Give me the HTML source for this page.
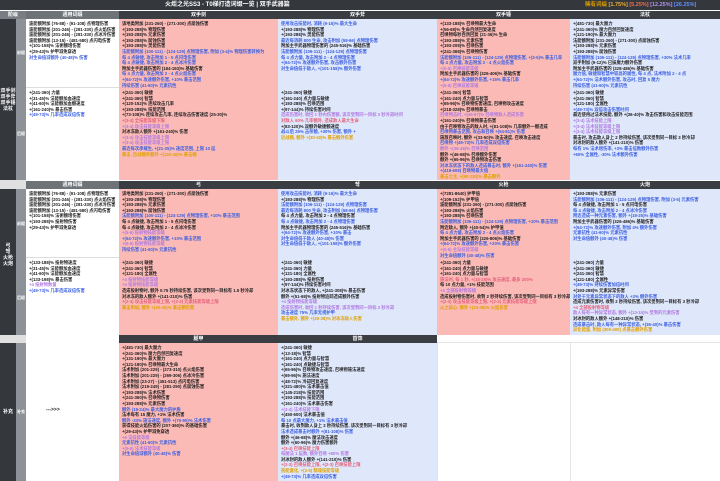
<!DOCTYPE html>
<html><head><meta charset="utf-8"><style>
*{margin:0;padding:0;box-sizing:border-box}
body{width:720px;height:481px;background:#fff;position:relative;overflow:hidden;font-family:"Liberation Sans","Noto Sans CJK SC",sans-serif;font-size:4.3px;line-height:5.6px;color:#222}
.a{position:absolute}
.dk{background:#34373c}
.hd{background:#3a3d42;color:#fff;text-align:center;font-size:5px;line-height:8px;font-weight:bold}
.pk{background:#fbbab6}
.bl{background:#dfe7fb}
.c{padding:2px 3px;overflow:hidden;font-weight:bold;white-space:nowrap}
.b{color:#3b5fe0}.p{color:#b07ae0}.r{color:#e3607a}.o{color:#e0a000}
.side{color:#fff;text-align:center;font-size:5px;line-height:6px;font-weight:bold}
.bd{border-bottom:1px solid #ddd}
</style></head><body>
<div class="a dk" style="left:0;top:0;width:720px;height:10px"></div>
<div class="a" style="left:165px;top:1px;color:#fff;font-size:6px;line-height:8px;font-weight:bold">火炬之光SS3 - T0梯打造词缀一览 | 双手武器篇</div>
<div class="a" style="left:585px;top:1px;font-size:5.5px;line-height:8px;font-weight:bold"><span class="o">稀有词缀</span> <span style="color:#f0b030">[1.75%]</span> <span style="color:#f07050">[5.25%]</span> <span style="color:#b090f0">[12.25%]</span> <span style="color:#6090ff">[26.25%]</span></div>

<div class="a dk" style="left:0;top:19px;width:16px;height:462px"></div>
<div class="a" style="left:16px;top:19px;width:10px;height:462px;background:#8d9198"></div>
<div class="a" style="left:0;top:180px;width:26px;height:9px;background:#e0e0e0"></div>
<div class="a" style="left:0;top:335px;width:26px;height:8px;background:#e0e0e0"></div>

<div class="a hd" style="left:0;top:11px;width:26px;height:8px;background:#7a7e84">阶级</div>
<div class="a hd" style="left:26px;top:11px;width:93px;height:8px;background:#6e7378">通用词缀</div>
<div class="a hd" style="left:119px;top:11px;width:601px;height:8px"></div>
<div class="a hd" style="left:119px;top:11px;width:159px">双手剑</div>
<div class="a hd" style="left:278px;top:11px;width:159px">双手斧</div>
<div class="a hd" style="left:437px;top:11px;width:133px">双手锤</div>
<div class="a hd" style="left:570px;top:11px;width:150px">法杖</div>

<div class="a hd" style="left:26px;top:181px;width:93px;height:8px;background:#6e7378">通用词缀</div>
<div class="a hd" style="left:119px;top:181px;width:601px;height:8px"></div>
<div class="a hd" style="left:119px;top:181px;width:159px">弓</div>
<div class="a hd" style="left:278px;top:181px;width:159px">弩</div>
<div class="a hd" style="left:437px;top:181px;width:133px">火枪</div>
<div class="a hd" style="left:570px;top:181px;width:150px">火炮</div>

<div class="a hd" style="left:119px;top:335px;width:159px;height:8px">腿甲</div>
<div class="a hd" style="left:278px;top:335px;width:159px;height:8px">首饰</div>

<div class="a side" style="left:0;top:88px;width:16px">双手剑<br>双手斧<br>双手锤<br>法杖</div>
<div class="a side" style="left:0;top:243px;width:16px">弓<br>弩<br>火枪<br>火炮</div>
<div class="a side" style="left:0;top:409px;width:16px">补充</div>
<div class="a side" style="left:16px;top:50px;width:10px;font-size:4px">前缀</div>
<div class="a side" style="left:16px;top:131px;width:10px;font-size:4px">后缀</div>
<div class="a side" style="left:16px;top:221px;width:10px;font-size:4px">前缀</div>
<div class="a side" style="left:16px;top:295px;width:10px;font-size:4px">后缀</div>
<div class="a side" style="left:16px;top:409px;width:10px;font-size:4px">补充</div>

<div class="a c bd" style="left:26px;top:19px;width:93px;height:69px">
<div>波能额附加 (76-88) - (91-108) 点物理伤害</div><div>波能额附加 (201-246) - (281-330) 点火焰伤害</div><div>波能额附加 (201-246) - (281-330) 点冰冷伤害</div><div>波能额附加 (13-15) - (481-580) 点闪电伤害</div><div>+(101-158)% 法術额增伤害</div><div>+(29-43)% 护甲减免穿透</div><div class="b">对生命值减额外 (40-48)% 伤害</div></div>
<div class="a c pk" style="left:119px;top:19px;width:159px;height:69px">
<div>该地类附加 (231-260) - (271-300) 点腐蚀伤害</div><div>+(193-288)% 物理伤害</div><div>+(193-288)% 元素伤害</div><div>+(193-288)% 腐蚀伤害</div><div>+(193-288)% 灵能伤害</div><div class="b">法能额附加 (100-111) - (124-129) 点物理伤害, 附加 (3-4)% 物理伤害转换为</div><div class="b">每 4 点敏捷, 攻击附加 1 - 5 点闪电伤害</div><div class="b">每 4 点敏捷, 攻击附加 2 - 4 点冰冷伤害</div><div>附加主手武器伤害的 (184-193)% 基础伤害</div><div class="b">每 4 点力量, 攻击附加 2 - 4 点火焰伤害</div><div class="b">+(64-72)% 攻速额外伤害, +10% 暴击范围</div><div class="b">持续伤害 (41-60)% 元素抗性</div></div>
<div class="a c bl" style="left:278px;top:19px;width:159px;height:69px">
<div class="b">使用攻击技能时, 消耗 (9-16)% 最大生命</div><div>+(193-288)% 物理伤害</div><div>+(193-288)% 灵能伤害</div><div class="b">最近每消耗 800 生命, 攻击附加 (58-66) 点物理伤害</div><div>附加主手武器物理伤害的 (245-516)% 基础伤害</div><div class="b">法能额附加 (106-111) - (124-129) 点物理伤害</div><div class="b">每 4 点力量, 攻击附加 2 - 4 点物理伤害</div><div class="b">+(64-72)% 攻速额外伤害, 攻击额外伤害</div><div class="b">对生命值低于敌人, +(101-158)% 额外伤害</div></div>
<div class="a c pk" style="left:437px;top:19px;width:133px;height:69px">
<div>+(133-188)% 召唤物最大生命</div><div>+(56-68)% 生命自然回复速度</div><div>召唤物每秒自然回复 (21-36)% 生命</div><div>+(193-288)% 元素伤害</div><div>+(193-208)% 召唤伤害</div><div>+(241-368)% 召唤物伤害</div><div class="b">法能额附加 (106-111) - (124-129) 点物理伤害, +(3-5)% 暴击几率</div><div class="b">每 4 点力量, 攻击附加 2 - 4 点火焰伤害</div><div class="p">+(5-6) 召唤技能等级</div><div>附加主手武器伤害的 (326-406)% 基础伤害</div><div class="b">+(64-72)% 攻速额外伤害, +15% 暴击几率</div><div class="p">+(5-6) 召唤技能等级</div></div>
<div class="a c bl" style="left:570px;top:19px;width:150px;height:69px">
<div>+(481-730) 最大魔力</div><div>+(241-360)% 魔力自然回复速度</div><div>+(121-190)% 最大魔力</div><div>法能额附加 (231-260) - (271-300) 点腐蚀伤害</div><div>+(193-288)% 元素伤害</div><div>+(193-288)% 腐蚀伤害</div><div class="b">法能额附加 (106-111) - (124-129) 点物理伤害, +30% 法术几率</div><div>双手附加 (9-12)% 已损魔力额外伤害</div><div>附加主手武器伤害的 (328-486)% 基础伤害</div><div class="b">魔力值, 敏捷和智慧中较高的属性, 每 4 点, 法术附加 2 - 4 点</div><div class="b">+(64-72)% 法术额外伤害, 攻击时, 回复 5 魔力</div><div class="b">持续伤害 (41-60)% 元素抗性</div></div>

<div class="a c" style="left:26px;top:88px;width:93px;height:92px">
<div>+(241-360) 力量</div><div>+(31-45)% 法能额加血速度</div><div>+(41-60)% 法能额加血额速度</div><div>+(161-240)% 暴击伤害</div><div class="b">+(49-73)% 几率造成双倍伤害</div></div>
<div class="a c pk" style="left:119px;top:88px;width:159px;height:92px">
<div>+(241-360) 敏捷</div><div>+(241-360) 智慧</div><div>+(120-152)% 连续攻击几率</div><div>+(193-288)% 技能范围</div><div>+(73-108)% 连续攻击几率, 连续攻击伤害速度 (25-30)%</div><div class="r">+(3-4) 全技能等级下限</div><div class="p">+(3-4) 攻击技能等级上限</div><div>对冰冻敌人额外 +(161-240)% 伤害</div><div class="p">+(3-4) 攻击技能等级上限</div><div class="p">+(3-4) 攻击技能等级上限</div><div class="b">最近每次承载生, +(21-25)% 速度范围, 上限 10 层</div><div class="o">暴击, 近战额外额外 +(130-40)% 暴击额</div></div>
<div class="a c bl" style="left:278px;top:88px;width:159px;height:92px">
<div>+(241-360) 敏捷</div><div>+(161-240) 点力量与敏捷</div><div>+(193-288)% 召唤范围</div><div>+(97-144)% 持续伤害时间</div><div class="p">造成伤害时, 收回 1 秒内伤害额, 该次受到同一目标 3 秒冷却时间</div><div class="r">对敌人 60% 几率额外, 造成敌人最大生命</div><div>+(83-120)% 双额外敏捷额速度</div><div class="b">战斗后 25% 击杀额, +30% 伤害, 额外 +</div><div class="o">近战额, 额外 +(30-40)% 暴击额外伤害</div></div>
<div class="a c pk" style="left:437px;top:88px;width:133px;height:92px">
<div>+(241-360) 智慧</div><div>+(161-240) 点力量与智慧</div><div>+(65-96)% 召唤物伤害速度, 召唤物攻击速度</div><div>+(218-328)% 召唤物暴击</div><div class="p">召唤物击时, +(45-67)% 召唤物敌人造成伤害</div><div>+(161-240)% 召唤物暴击伤害</div><div>由于召唤物攻击的敌人时, +(81-108)% 几率额外一额造成</div><div class="b">召唤物暴击范围, 攻击和召唤 +(54-81)% 伤害</div><div>施放召唤时, 额外 +(33-50)% 攻击速度, 召唤攻击速度</div><div class="b">召唤物 +(49-73)% 几率造成双倍伤害</div><div class="p">额外 +(36-48)% 召唤范围</div><div>额外 +(46-68)% 召唤额外伤害</div><div>额外 +(65-96)% 召唤物攻击伤害</div><div class="b">对冰冻状态下的敌人造成暴击时, 额外 +(161-240)% 伤害</div><div class="b">+(418-608) 召唤物最大值</div><div class="o">暴击之主, +(90-130)% 暴击额外</div></div>
<div class="a c bl" style="left:570px;top:88px;width:150px;height:92px">
<div>+(241-360) 敏捷</div><div>+(241-360) 智慧</div><div>+(121-180) 全属性</div><div class="b">+(49-73)% 双倍攻击伤害时间</div><div>最近使用过法术技能, 额外 +(36-40)% 攻击伤害和攻击技能范围</div><div class="p">+(3-4) 法术技能上限</div><div class="p">+(3-4) 法术技能等级上限</div><div class="p">+(3-4) 法术技能等级上限</div><div>暴击时, 攻击敌人身上 2 秒持续伤害, 该次受到同一目标 3 秒冷却</div><div>对冰封的敌人额外 +(141-210)% 伤害</div><div class="b">每有 1% 法术增伤率, +3% 暴击倍数额外伤害</div><div class="b">+60% 全属性, -30% 法术额外伤害</div></div>

<div class="a c bd" style="left:26px;top:189px;width:93px;height:69px">
<div>波能额附加 (76-88) - (91-108) 点物理伤害</div><div>波能额附加 (201-246) - (281-330) 点火焰伤害</div><div>波能额附加 (201-246) - (281-330) 点冰冷伤害</div><div>波能额附加 (13-15) - (481-580) 点闪电伤害</div><div>+(101-158)% 法術额增伤害</div><div>+(193-288)% 投射物伤害</div><div>+(29-43)% 护甲减免穿透</div></div>
<div class="a c pk" style="left:119px;top:189px;width:159px;height:69px">
<div>该地类附加 (231-260) - (271-300) 点腐蚀伤害</div><div>+(193-288)% 物理伤害</div><div>+(193-288)% 元素伤害</div><div>+(193-288)% 腐蚀伤害</div><div class="b">法能额附加 (100-111) - (124-129) 点物理伤害, +10% 暴击范围</div><div>每 4 点敏捷, 攻击附加 1 - 5 点闪电伤害</div><div>每 4 点敏捷, 攻击附加 2 - 4 点冰冷伤害</div><div class="p">+(5-6) 投射物技能等级</div><div class="b">+(64-72)% 攻速额外伤害, +10% 暴击范围</div><div class="p">+(5-6) 投射物技能等级</div><div class="b">持续伤害 (41-60)% 元素抗性</div></div>
<div class="a c bl" style="left:278px;top:189px;width:159px;height:69px">
<div class="b">使用攻击技能时, 消耗 (9-16)% 最大生命</div><div>+(193-288)% 物理伤害</div><div class="b">法能额附加 (106-111) - (124-129) 点物理伤害</div><div class="b">最近每消耗 800 生命, 攻击附加 (58-66) 点物理伤害</div><div>每 4 点力量, 攻击附加 2 - 4 点物理伤害</div><div class="b">每 4 点敏捷, 攻击附加 2 - 4 点物理伤害</div><div>附加主手武器物理伤害的 (245-516)% 基础伤害</div><div class="b">+(64-72)% 攻速额外伤害, +10% 暴击</div><div class="b">对生命值低于敌人 (40-48)% 伤害</div><div class="b">对生命值低于敌人, +(101-158)% 额外伤害</div></div>
<div class="a c pk" style="left:437px;top:189px;width:133px;height:69px">
<div>+(7281-8640) 护甲值</div><div>+(109-152)% 护甲值</div><div>波能额附加 (231-260) - (271-300) 点腐蚀伤害</div><div>+(193-288)% 火焰伤害</div><div>+(193-288)% 召唤伤害</div><div class="b">法能额附加 (106-111) - (124-129) 点物理伤害, +10% 暴击范围</div><div>附近敌人, 额外 +(40-54)% 护甲值</div><div class="b">每 4 点力量, 攻击附加 2 - 4 点火焰伤害</div><div>附加主手武器伤害的 (326-806)% 基础伤害</div><div class="b">+(64-72)% 攻速额外伤害, +20% 暴击伤害</div><div class="p">+(5-6) 主动技能等级</div><div class="b">对生命值额外 (40-48)% 伤害</div></div>
<div class="a c bl" style="left:570px;top:189px;width:150px;height:69px">
<div>+(193-288)% 元素伤害</div><div class="b">法能额附加 (106-111) - (124-129) 点物理伤害, 附加 (3-5) 元素伤害</div><div>每 4 点敏捷, 攻击附加 1 - 5 点闪电伤害</div><div class="b">每 4 点敏捷, 攻击附加 2 - 4 点冰冷伤害</div><div class="b">附近造成一种元素伤害, 额外 +(19-25)% 基础伤害</div><div>附加主手武器伤害的 (326-486)% 基础伤害</div><div class="b">+(64-72)% 攻速额外伤害, 附加 4% 额外伤害</div><div class="b">元素抗性 (41-60)% 元素抗性</div><div class="b">对生命值额外 (40-48)% 伤害</div></div>

<div class="a c" style="left:26px;top:258px;width:93px;height:77px">
<div>+(133-188)% 投射物速度</div><div>+(31-45)% 法能额加血速度</div><div>+(41-60)% 法能额加血速度</div><div>+(133-198)% 暴击伤害</div><div class="p">+4 投射物数量</div><div class="b">+(49-73)% 几率造成双倍伤害</div></div>
<div class="a c pk" style="left:119px;top:258px;width:159px;height:77px">
<div>+(241-360) 敏捷</div><div>+(241-360) 智慧</div><div>+(121-180) 全属性</div><div class="p">+4 投射物技能等级</div><div class="p">+4 投射物技能等级</div><div>造成投射物时, 额外 0.75 秒持续伤害, 该次受到同一目标有 1.5 秒冷却</div><div>对冰冻的敌人额外 +(141-210)% 伤害</div><div class="r">+(2-3) 攻击技能等级上限, +(2-3) 元素技能等级上限</div><div class="o">暴击附加, 额外 +(30-40)% 暴击额伤害</div></div>
<div class="a c bl" style="left:278px;top:258px;width:159px;height:77px">
<div>+(241-360) 敏捷</div><div>+(241-360) 力量</div><div>+(121-180) 全属性</div><div>+(193-288)% 投射伤害</div><div>+(97-144)% 持续伤害时间</div><div>对冰冻状态下的敌人, +(241-308)% 暴击伤害</div><div>额外 +(51-68)% 投射物追踪造成额外伤害</div><div class="p">+4 投射物技能等级</div><div class="p">造成伤害时, 收回 1 秒持续伤害, 该次受到同一目标 3 秒冷却</div><div class="b">攻击速度 75% 几率无视护甲</div><div class="o">暴击额外, 额外 +(30-38)% 对冰冻敌人伤害</div></div>
<div class="a c pk" style="left:437px;top:258px;width:133px;height:77px">
<div>+(241-360) 力量</div><div>+(161-240) 点力量与敏捷</div><div>+(161-240) 点力量与智慧</div><div class="r">施法时, 每 1 秒, +(18-28)% 攻击速度, 最多 200%</div><div>每 10 点力量, +1% 技能范围</div><div class="p">+4 全部投射物等级</div><div>造成投射物伤害时, 收到 2 秒持续伤害, 该次受到同一目标有 3 秒冷却</div><div class="r">+(2-3) 攻击技能等级上限, +(2-3) 元素技能等级上限</div><div class="o">火之核心, 额外 +(33-38)% 火焰伤害</div></div>
<div class="a c bl" style="left:570px;top:258px;width:150px;height:77px">
<div>+(241-360) 力量</div><div>+(241-360) 敏捷</div><div>+(241-360) 智慧</div><div>+(121-180) 全属性</div><div class="b">+(49-73)% 持续伤害加倍时间</div><div>+(193-288)% 元素异常伤害</div><div class="b">对处于元素异常状态下的敌人 +3% 额外伤害</div><div>造成元素伤害时, 收到 2 秒持续伤害, 该次受到同一目标有 3 秒冷却</div><div class="r">+4 全部投射物等级</div><div class="p">敌人每有一种异常状态, 额外 +(13-15)% 受到的元素伤害</div><div>对冰封的敌人额外 +(148-210)% 伤害</div><div class="b">造成暴击时, 敌人每有一种异常状态, +(36-40)% 暴击伤害</div><div class="o">异化能量, 附加 (300-400) 点暴击额外伤害</div></div>

<div class="a" style="left:46px;top:408px;font-size:5px;font-weight:bold">---&gt;&gt;&gt;</div>
<div class="a c pk" style="left:119px;top:343px;width:159px;height:138px">
<div>+(481-730) 最大魔力</div><div>+(241-360)% 魔力自然回复速度</div><div>+(131-190)% 最大魔力</div><div>+(121-180)% 召唤物最大生命</div><div>法术附加 (201-229) - (273-310) 点火焰伤害</div><div>法术附加 (201-229) - (269-306) 点冰冷伤害</div><div>法术附加 (23-27) - (451-513) 点闪电伤害</div><div>法术附加 (219-249) - (281-290) 点腐蚀伤害</div><div>+(193-288)% 法术伤害</div><div>+(241-360)% 召唤物伤害</div><div>+(193-288)% 元素伤害</div><div class="b">额外 (19-24)% 最大魔力的护盾</div><div>法术每有 15 魔力, +1% 法术伤害</div><div class="b">额外 -33% 施法速度, 额外 +(70-90)% 法术伤害</div><div>获得技能火焰伤害的 (207-360)% 的基础伤害</div><div>+(29-43)% 护甲减免穿透</div><div class="p">+6 法技能等级</div><div class="b">元素抗性 (41-60)% 元素抗性</div><div class="p">+(5-6) 法术技能等级</div><div class="b">对生命值减额外 (40-48)% 伤害</div></div>
<div class="a c bl" style="left:278px;top:343px;width:159px;height:138px">
<div>+(241-360) 敏捷</div><div>+(13-18)% 智慧</div><div>+(161-240) 点力量与智慧</div><div>+(161-240) 点敏捷与智慧</div><div>+(65-96)% 召唤物攻击速度, 召唤物施法速度</div><div>+(69-96)% 施法速度</div><div>+(48-72)% 冷却回复速度</div><div>+(321-480)% 法术暴击值</div><div>+(145-218)% 技能范围</div><div>+(193-288)% 技能范围</div><div>+(161-240)% 法术暴击伤害</div><div class="p">+(3-4) 法术技能下限</div><div>+(450-600) 法术暴击值</div><div class="b">每 10 点最大魔力, +1% 法术暴击值</div><div>暴击时, 收到敌人身上 2 秒持续伤害, 该次受到同一目标有 3 秒冷却</div><div class="b">法术造成暴击时额外 +(81-108)% 伤害</div><div>额外 +(46-68)% 魔法攻击速度</div><div>额外 +(60-96)% 魔力伤害额外</div><div class="r">+(3-4) 召唤技能上限</div><div class="p">每魔法 1 层数, 额外召唤 +80% 伤害</div><div>对冰封的敌人额外 +(141-210)% 伤害</div><div class="r">+(2-3) 召唤技能上限, +(2-3) 召唤技能上限</div><div class="o">热能量化, +(3-5) 精魂技能等级</div><div class="b">+(49-73)% 几率造成双倍伤害</div></div>
<div class="a" style="left:437px;top:343px;width:1px;height:138px;background:#e4e4e4"></div>
<div class="a" style="left:570px;top:343px;width:1px;height:138px;background:#e4e4e4"></div>
<div class="a" style="left:437px;top:342px;width:283px;height:1px;background:#e4e4e4"></div>
</body></html>
